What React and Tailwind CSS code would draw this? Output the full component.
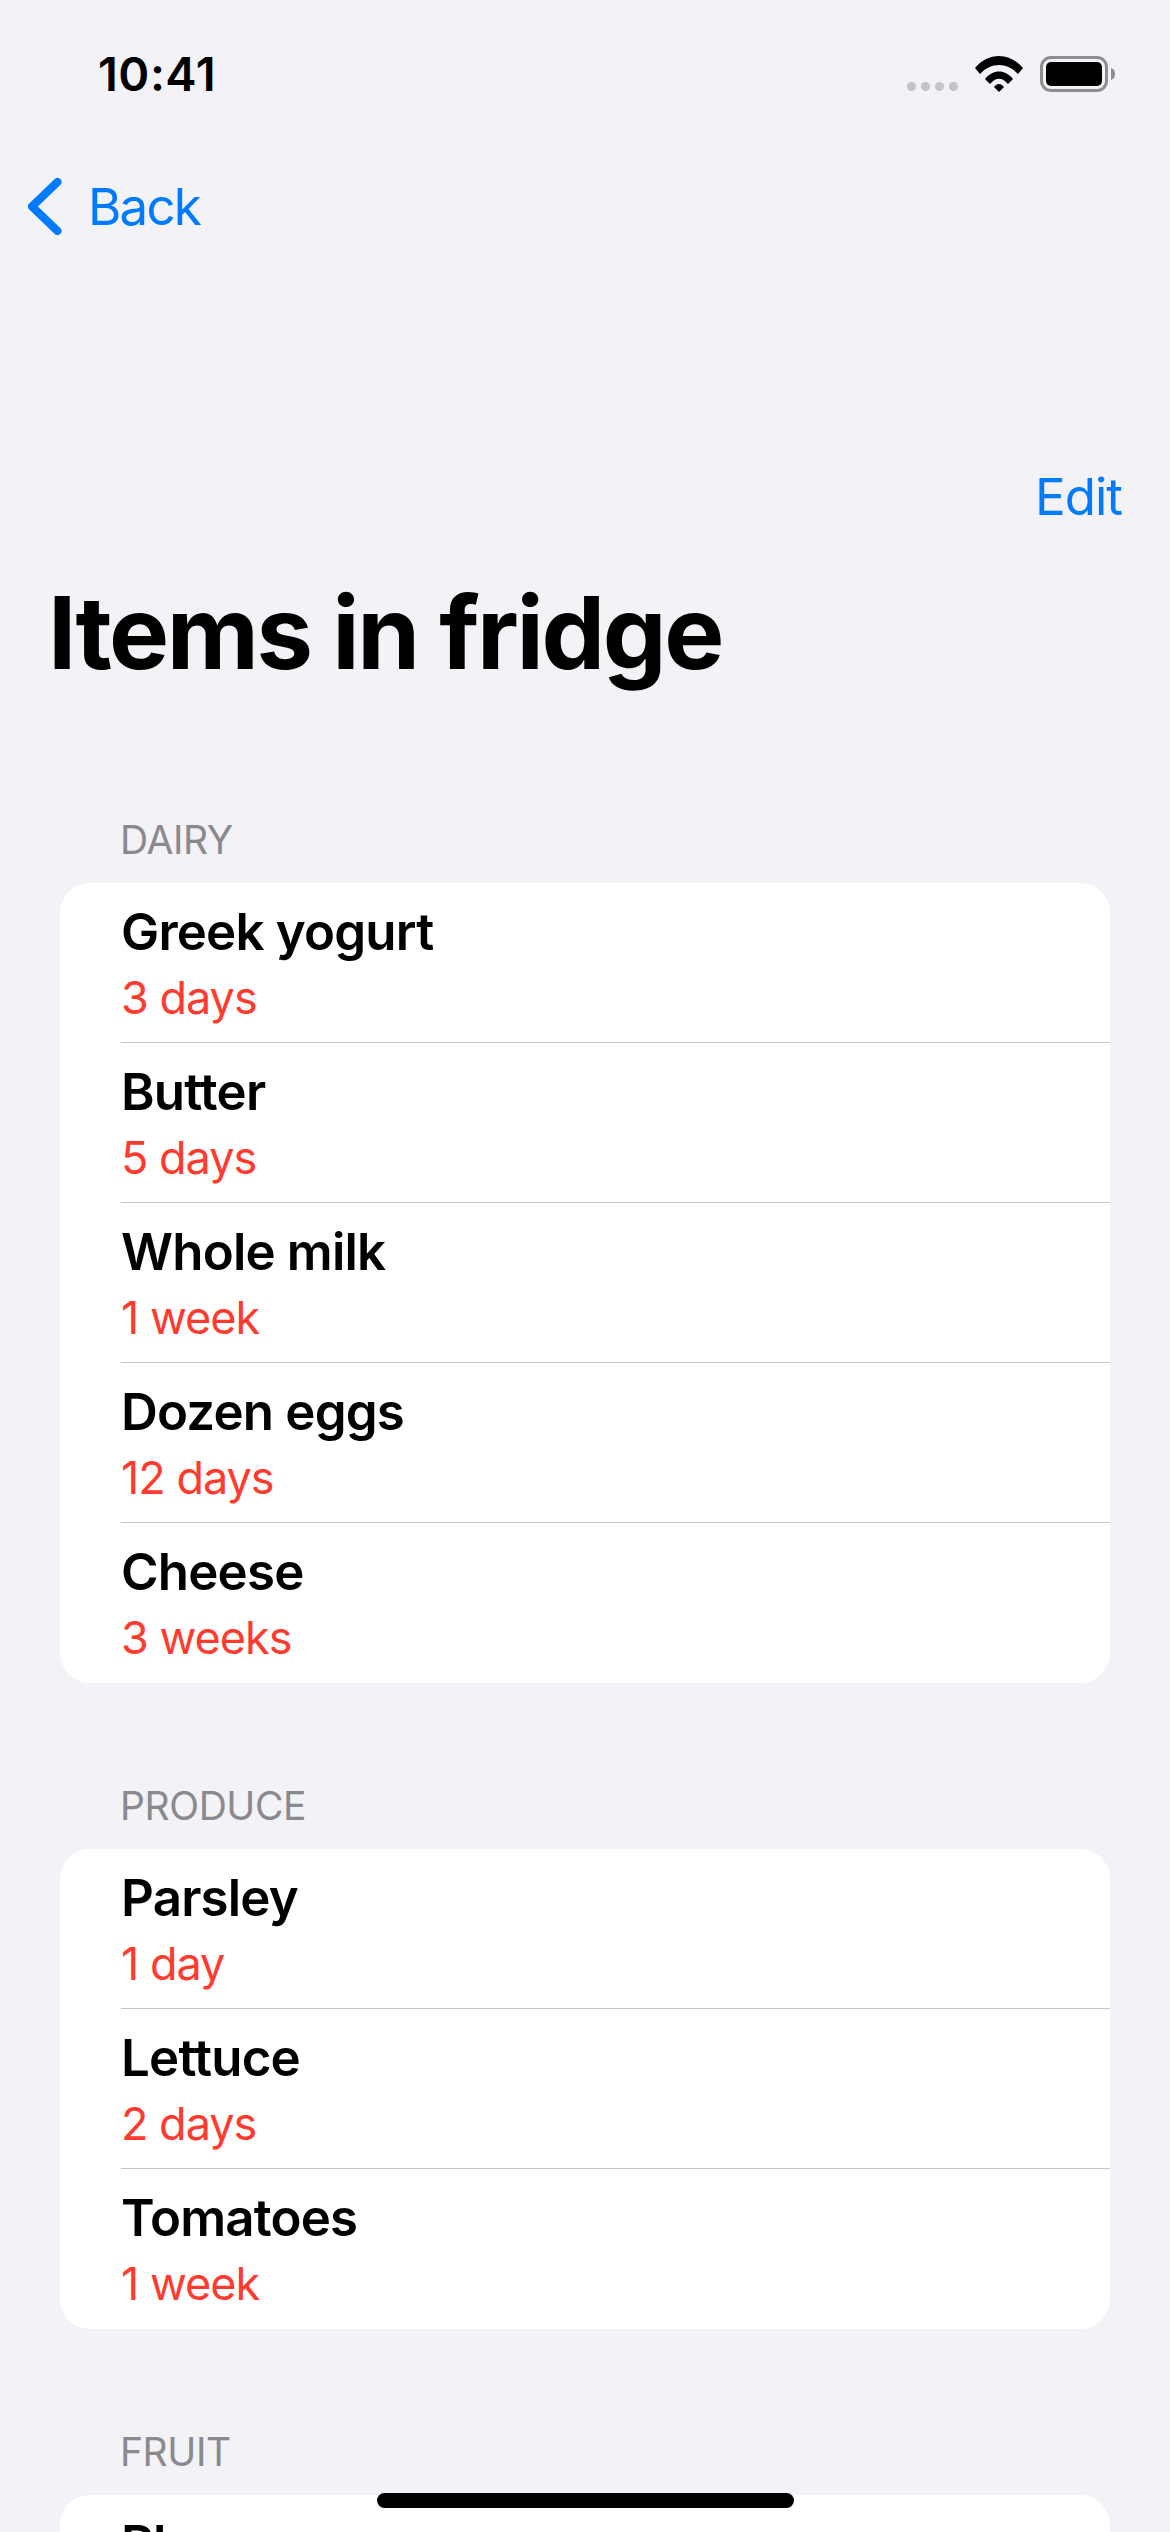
import React from "react";

const sections = [
  {
    title: "DAIRY",
    items: [
      ["Greek yogurt", "3 days"],
      ["Butter", "5 days"],
      ["Whole milk", "1 week"],
      ["Dozen eggs", "12 days"],
      ["Cheese", "3 weeks"],
    ],
  },
  {
    title: "PRODUCE",
    items: [
      ["Parsley", "1 day"],
      ["Lettuce", "2 days"],
      ["Tomatoes", "1 week"],
    ],
  },
  {
    title: "FRUIT",
    items: [["Plums"]],
  },
];

const StatusIcons = () => (
  <div className="flex items-center">
    <div className="flex gap-[5px] mt-[25px] mr-[17px]">
      <div className="w-[9px] h-[9px] rounded-full bg-[#c4c4c8]" />
      <div className="w-[9px] h-[9px] rounded-full bg-[#c4c4c8]" />
      <div className="w-[9px] h-[9px] rounded-full bg-[#c4c4c8]" />
      <div className="w-[9px] h-[9px] rounded-full bg-[#c4c4c8]" />
    </div>
    <svg width="48" height="36" viewBox="0 0 48 36" className="mr-[17px]">
      <path d="M0 12 C13 -4 35 -4 48 12 L43 18 C32 6 16 6 5 18 Z" fill="#000" />
      <path d="M10 23 C18 13 30 13 38 23 L33 28 C27 21 21 21 15 28 Z" fill="#000" />
      <path d="M19 31 C22 27 26 27 29 31 L24 36 Z" fill="#000" />
    </svg>
    <div className="w-[68px] h-[36px] rounded-[11px] border-[3px] border-[#8e8e90] p-[3px]">
      <div className="w-full h-full rounded-[5px] bg-black" />
    </div>
    <svg width="4" height="12" viewBox="0 0 4 12" className="ml-[3px]">
      <path d="M0 0 C3 1 4 3 4 6 C4 9 3 11 0 12 Z" fill="#8e8e90" />
    </svg>
  </div>
);

const App = () => {
  return (
    <div className="relative h-[2532px] w-[1170px] overflow-hidden bg-[#f2f2f7] font-['Inter',sans-serif]">
      <div className="flex items-center justify-between h-[74px] mt-[37px] pl-[98px] pr-[55px]">
        <span className="text-[47px] leading-[74px] font-semibold tracking-[0.5px] text-black">10:41</span>
        <StatusIcons />
      </div>

      <div className="flex items-center h-[60px] mt-[66px] pl-[28px] text-[#007aff]">
        <svg width="36" height="60" viewBox="0 0 36 60" fill="none">
          <path
            d="M29.5 5 L4 29.5 L29.5 54"
            stroke="#007aff"
            strokeWidth="8"
            strokeLinecap="round"
            strokeLinejoin="round"
          />
        </svg>
        <span className="ml-[24px] text-[51px] leading-[60px] tracking-[-1.8px]">Back</span>
      </div>

      <div className="flex justify-end mt-[230px] pr-[48px] h-[60px]">
        <span className="text-[51px] leading-[60px] tracking-[-1px] text-[#007aff]">Edit</span>
      </div>

      <h1 className="mt-[45px] pl-[48px] text-[101px] leading-[120px] font-bold tracking-[-2.4px] text-black">
        Items in fridge
      </h1>

      <div className="mt-[124px] flex flex-col gap-[99px] px-[60px]">
        {sections.map((section) => (
          <section key={section.title}>
            <h2 className="pl-[60px] h-[47px] text-[39px] leading-[47px] tracking-[-0.4px] text-[#8a8a8e]">
              {section.title}
            </h2>
            <div className="mt-[20px] w-[1050px] rounded-[30px] bg-white overflow-hidden">
              {section.items.map(([name, age], i) => (
                <div key={name} className="pl-[61px] h-[160px] relative">
                  <div className="pt-[19px] text-[51px] leading-[60px] font-[560] tracking-[-0.8px] text-black">{name}</div>
                  {age && (
                    <div className="mt-[9px] text-[45px] leading-[54px] tracking-[-1px] text-[#ff3b30]">{age}</div>
                  )}
                  {i < section.items.length - 1 && (
                    <div className="absolute left-[61px] right-0 bottom-0 h-px bg-[#c6c6c8]" />
                  )}
                </div>
              ))}
            </div>
          </section>
        ))}
      </div>

      <div className="absolute left-[377px] top-[2493px] w-[417px] h-[15px] rounded-full bg-black" />
    </div>
  );
};

export default App;
